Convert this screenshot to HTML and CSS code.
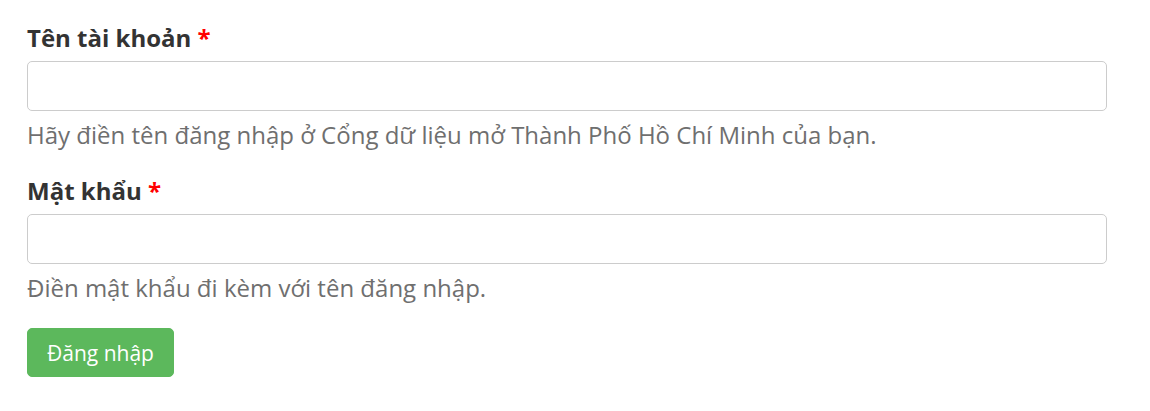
FILE: index.html
```html
<!DOCTYPE html>
<html lang="vi">
<head>
	<meta charset="utf-8">
	<meta name="viewport" content="width=device-width,initial-scale=1">
	<title>Đăng nhập</title>
	<link rel="stylesheet" href="styles.css">
</head>
<body>
	<form class="login">
		<div class="group">
			<label class="lbl" for="user">Tên tài khoản <span class="req">*</span></label>
			<input type="text" id="user" class="in">
			<p class="help">Hãy điền tên đăng nhập ở Cổng dữ liệu mở Thành Phố Hồ Chí Minh của bạn.</p>
		</div>
		<div class="group">
			<label class="lbl" for="pass">Mật khẩu <span class="req">*</span></label>
			<input type="password" id="pass" class="in">
			<p class="help">Điền mật khẩu đi kèm với tên đăng nhập.</p>
		</div>
		<button type="submit" class="btn">Đăng nhập</button>
	</form>
</body>
</html>
```

FILE: styles.css
```css
* {
	margin: 0;
	padding: 0;
	box-sizing: border-box;
}
body {
	font-family: "Open Sans", sans-serif;
	font-size: 24px;
	line-height: 34px;
	color: #333;
	background: #fff;
}
.login {
	width: 1080px;
	margin-left: 27px;
	padding-top: 21px;
}
.group {
	margin-bottom: 22px;
}
.group:last-of-type {
	margin-bottom: 23px;
}
.lbl {
	display: block;
	font-weight: 700;
	margin-bottom: 6px;
}
.req {
	color: #f00;
}
.in {
	display: block;
	width: 100%;
	height: 50px;
	border: 1px solid #ccc;
	border-radius: 5px;
	padding: 9px 18px;
	font-family: inherit;
	font-size: 21px;
}
.in:focus {
	outline: none;
	border-color: #66afe9;
}
.help {
	margin-top: 7px;
	color: #6f6f6f;
}
.btn {
	display: block;
	height: 49px;
	padding: 0 19px;
	border: 1px solid #5cb85c;
	border-radius: 5px;
	background: #5cb85c;
	color: #fff;
	font-family: inherit;
	font-size: 21px;
	line-height: 30px;
	cursor: pointer;
}
```
